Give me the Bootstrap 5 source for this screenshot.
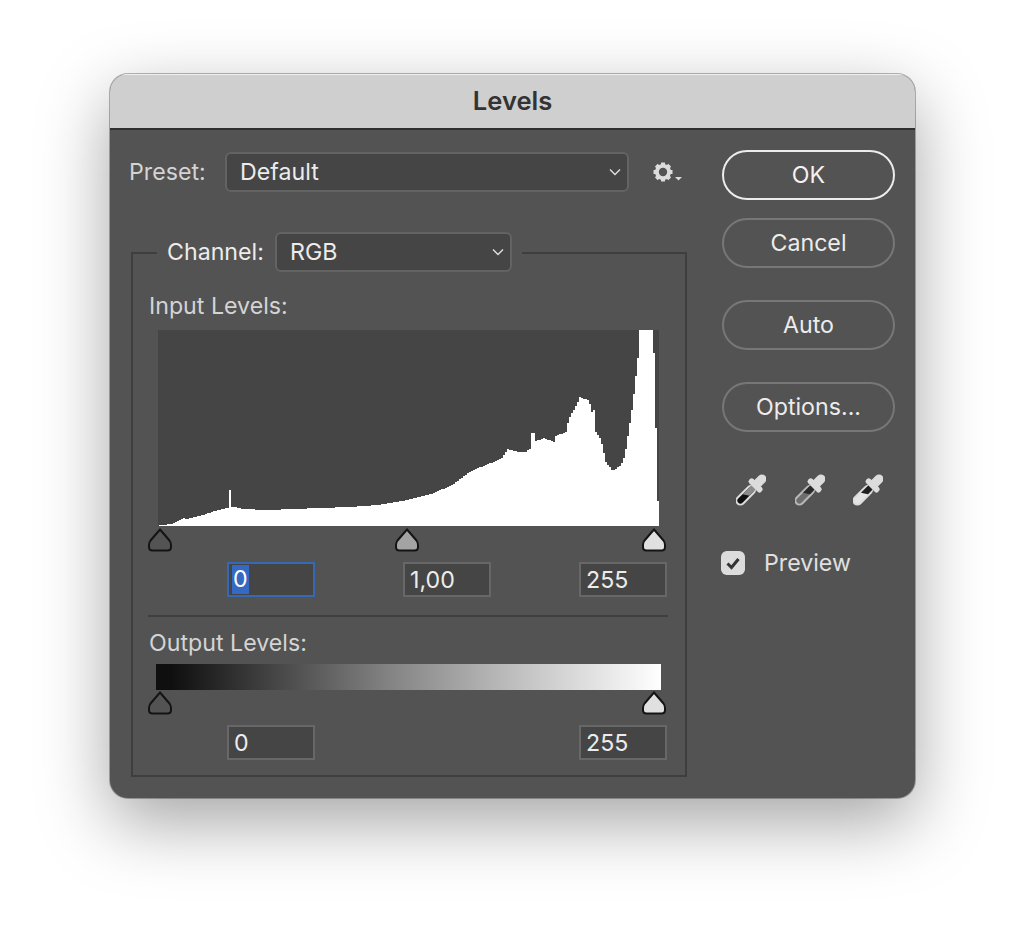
<!DOCTYPE html>
<html lang="en">
<head>
  <meta charset="UTF-8">
  <title>Levels</title>
  <link href="https://cdn.jsdelivr.net/npm/bootstrap@5.3.0/dist/css/bootstrap.min.css" rel="stylesheet">
  <style>
    body {
      background: #fff;
      font-family: Inter, "Liberation Sans", sans-serif;
      padding: 74px 0 0 110px;
      height: 944px;
      overflow: hidden;
    }
    .dlg {
      width: 805px;
      height: 724px;
      background: #535353;
      border-radius: 18px;
      overflow: hidden;
      box-shadow: 0 0 0 1px rgba(0,0,0,.28), 0 24px 70px rgba(0,0,0,.36);
      font-size: 23.2px;
      color: #d4d4d4;
    }
    .dlg-title {
      height: 56px;
      background: #cfcfcf;
      border-top: 1px solid #f0f0f0;
      border-bottom: 2px solid #2f2f2f;
      color: #333;
      font-weight: 600;
      font-size: 25.5px;
    }
    .left-col { width: 612px; }
    .preset-row { padding: 22px 0 0 19px; height: 62px; }
    .preset-label { width: 96px; line-height: 40px; }
    .dark-select {
      height: 40px;
      padding: 0 30px 2px 13px;
      font-size: 23.2px;
      line-height: 36px;
      color: #ececec;
      background-color: #454545;
      background-image: url("data:image/svg+xml,%3csvg xmlns='http://www.w3.org/2000/svg' viewBox='0 0 12 8'%3e%3cpath fill='none' stroke='%23e0e0e0' stroke-width='1.4' d='M1 1.5l5 5 5-5'/%3e%3c/svg%3e");
      background-position: right 6px center;
      background-size: 12px 8px;
      border: 2px solid #636363;
      border-radius: 6px;
    }
    .gear-btn { margin-left: 24px; }
    .group-box {
      margin: 60px 0 0 21px;
      width: 556px;
      height: 525px;
      border: 2px solid #3e3e3e;
      padding: 0 17px 0 16px;
    }
    .group-legend {
      margin: -22px 0 0 8px;
      width: 365px;
      height: 40px;
      padding-left: 10px;
      background: #535353;
      color: #ececec;
    }
    .channel-label { width: 108px; }
    .field-label { line-height: 28px; }
    .input-label { margin-top: 20px; }
    .histo {
      display: block;
      margin: 10px 0 0 9px;
      width: 501px;
      height: 196px;
      background: #454545;
    }
    .handles { margin: 2px 0 0 -1px; width: 518px; height: 24px; }
    .fields { margin: 10px 0 0 78px; width: 440px; }
    .level-input {
      width: 88px;
      height: 35px;
      padding: 0 0 0 5px;
      font-size: 23.2px;
      line-height: 33px;
      color: #ececec;
      background: #454545;
      border: 2px solid #676767;
      border-radius: 0;
    }
    .level-input.active-field { border-color: #3569b5; padding: 1px 0 0 3px; }
    .sel-text { background: #3569c4; display: inline-block; padding: 0 1px; line-height: 29px; vertical-align: top; color: #fff; }
    .level-sep { border-top: 2px solid #3e3e3e; margin: 18px 0 0 -1px; width: 520px; }
    .output-label { margin-top: 12px; }
    .ramp {
      margin: 7px 0 0 7px;
      width: 505px;
      height: 26px;
      background: linear-gradient(to right, #0f0f0f 3%, #3c3c3c 20%, #808080 45%, #c8c8c8 75%, #fff 100%);
    }
    .handles-out { margin-top: 1px; }
    .output-fields { margin-top: 10px; }
    .right-col { width: 173px; padding-top: 20px; }
    .pill-btn {
      display: block;
      width: 173px;
      height: 50px;
      padding: 0;
      font-size: 23.2px;
      line-height: 44px;
      color: #ececec;
      background: transparent;
      border: 2px solid #777;
      border-radius: 25px;
    }
    .pill-btn.is-default { border-color: #ececec; color: #f2f2f2; margin-bottom: 18px; }
    .pill-btn.spaced { margin-bottom: 32px; }
    .droppers { margin: 42px 0 0 14px; width: 147px; }
    .preview-row { margin-top: 40px; margin-left: -1px; color: #e0e0e0; }
    .preview-check {
      width: 24px;
      height: 24px;
      margin: 0 19px 0 0;
      border: 0;
      border-radius: 4px;
      background-color: #dcdcdc;
      opacity: 1 !important;
    }
    .preview-check:checked {
      background-color: #dcdcdc;
      background-size: 18px;
      background-image: url("data:image/svg+xml,%3csvg xmlns='http://www.w3.org/2000/svg' viewBox='0 0 18 18'%3e%3cpath fill='none' stroke='%23333' stroke-width='3' d='M3.5 9.5l4 4 7-8.5'/%3e%3c/svg%3e");
    }
  </style>
</head>
<body onload="gambarHisto()">

  <svg width="0" height="0" class="position-absolute">
    <defs>
      <path id="handle" d="M12 1.5 L21.5 12.5 Q23 14.5 23 17 V19 Q23 22.5 19.5 22.5 H4.5 Q1 22.5 1 19 V17 Q1 14.5 2.5 12.5 Z" stroke="#141414" stroke-width="2"/>
      <g id="dropper-top" fill="#dcdcdc">
        <rect x="-4.5" y="-20" width="9" height="15" rx="4.5"/>
        <rect x="-8.5" y="-9.5" width="17" height="6" rx="2.5"/>
      </g>
    </defs>
  </svg>

  <div class="dlg">
    <div class="dlg-title d-flex align-items-center justify-content-center">Levels</div>

    <div class="d-flex">
      <!-- Left side -->
      <div class="left-col">
        <div class="preset-row d-flex align-items-start">
          <label class="preset-label">Preset:</label>
          <select class="form-select dark-select" style="width:404px"><option>Default</option></select>
          <svg class="gear-btn" width="31" height="40" viewBox="0 0 31 40">
            <g transform="translate(10 20)" fill="#dcdcdc">
              <circle r="6" fill="none" stroke="#dcdcdc" stroke-width="4"/>
              <rect x="-2" y="-9.5" width="4" height="19"/>
              <rect x="-2" y="-9.5" width="4" height="19" transform="rotate(45)"/>
              <rect x="-2" y="-9.5" width="4" height="19" transform="rotate(90)"/>
              <rect x="-2" y="-9.5" width="4" height="19" transform="rotate(135)"/>
              <circle r="4.2" fill="#535353"/>
            </g>
            <path d="M22 25h7l-3.5 3.5z" fill="#dcdcdc"/>
          </svg>
        </div>

        <div class="group-box">
          <div class="group-legend d-flex align-items-center">
            <span class="channel-label">Channel:</span>
            <select class="form-select dark-select" style="width:237px"><option>RGB</option></select>
          </div>

          <div class="field-label input-label">Input Levels:</div>
          <svg class="histo" viewBox="158 330 501 196" shape-rendering="crispEdges">
            <polygon id="histo-shape" fill="#fff"/>
          </svg>
          <div class="handles d-flex justify-content-between">
            <svg width="24" height="24"><use href="#handle" fill="none"/></svg>
            <svg width="24" height="24"><use href="#handle" fill="#a3a3a3"/></svg>
            <svg width="24" height="24"><use href="#handle" fill="#e0e0e0"/></svg>
          </div>
          <div class="fields d-flex justify-content-between">
            <div class="form-control level-input active-field"><span class="sel-text">0</span></div>
            <div class="form-control level-input">1,00</div>
            <div class="form-control level-input">255</div>
          </div>
          <div class="level-sep"></div>

          <div class="field-label output-label">Output Levels:</div>
          <div class="ramp"></div>
          <div class="handles handles-out d-flex justify-content-between">
            <svg width="24" height="24"><use href="#handle" fill="none"/></svg>
            <svg width="24" height="24"><use href="#handle" fill="#e0e0e0"/></svg>
          </div>
          <div class="fields output-fields d-flex justify-content-between">
            <div class="form-control level-input">0</div>
            <div class="form-control level-input">255</div>
          </div>
        </div>
      </div>

      <!-- Right side -->
      <div class="right-col">
        <button class="btn pill-btn is-default">OK</button>
        <button class="btn pill-btn spaced">Cancel</button>
        <button class="btn pill-btn spaced">Auto</button>
        <button class="btn pill-btn">Options...</button>

        <div class="droppers d-flex justify-content-between">
          <svg width="30" height="32" viewBox="-15 -16 30 32">
            <g transform="rotate(45)">
              <rect x="-4" y="-4" width="8" height="23" rx="4" fill="#0f0f0f" stroke="#dcdcdc" stroke-width="2"/>
              <path d="M-3-4h6V5l-6 4z" fill="#8a8a8a"/>
              <use href="#dropper-top"/>
            </g>
          </svg>
          <svg width="30" height="32" viewBox="-15 -16 30 32">
            <g transform="rotate(45)">
              <rect x="-4" y="-4" width="8" height="23" rx="4" fill="#6e6e6e" stroke="#b8b8b8" stroke-width="2"/>
              <path d="M-3-4h6V3l-6 4z" fill="#2a2a2a"/>
              <use href="#dropper-top"/>
            </g>
          </svg>
          <svg width="30" height="32" viewBox="-15 -16 30 32">
            <g transform="rotate(45)">
              <rect x="-4" y="-4" width="8" height="23" rx="4" fill="#e4e4e4" stroke="#dcdcdc" stroke-width="2"/>
              <path d="M-3-4h6V3l-6 4z" fill="#1e1e1e"/>
              <use href="#dropper-top"/>
            </g>
          </svg>
        </div>

        <div class="preview-row d-flex align-items-center">
          <input class="form-check-input preview-check" type="checkbox" checked>
          <label>Preview</label>
        </div>
      </div>
    </div>
  </div>

  <script>
    // titik histogram: x, y (koordinat layar)
    const titik = [
      [159,525],[172,524],[182,518],[187,519],[193,517],[203,515],[213,511],[225,508],
      [233,507],[243,509],[267,510],[293,509],[317,508],[350,507],[377,505],[407,500],
      [433,493],[453,484],[467,473],[480,467],[500,459],[507,449],[517,452],[525,452],
      [530,448],[535,441],[543,438],[553,442],[555,436],[565,432],[568,419],[577,402],
      [578,397],[588,400],[591,412],[593,410],[595,432],[600,440],[605,462],[612,471],
      [620,465],[624,455],[628,430],[632,403],[634,385],[637,358],[638,330],[651,330],
      [652,353],[654,353],[655,428],[657,501],[659,501]
    ];

    function tinggiDi(x) {
      for (let i = 1; i < titik.length; i++) {
        if (x <= titik[i][0]) {
          const a = titik[i - 1], b = titik[i];
          return a[1] + (b[1] - a[1]) * (x - a[0]) / (b[0] - a[0]);
        }
      }
      return 501;
    }

    function gambarHisto() {
      let pts = "159,526 ";
      for (let x = 159; x < 659; x += 2) {
        let y = Math.round(tinggiDi(x));
        // sedikit gerigi di bagian tengah
        if (x > 400 && x < 600 && x % 6 === 0) y -= 2;
        if (x === 229) y = 490;
        if (x === 531 || x === 533) y = 433;
        pts += x + "," + y + " " + (x + 2) + "," + y + " ";
      }
      pts += "659,526";
      document.getElementById("histo-shape").setAttribute("points", pts);
    }
  </script>
</body>
</html>
